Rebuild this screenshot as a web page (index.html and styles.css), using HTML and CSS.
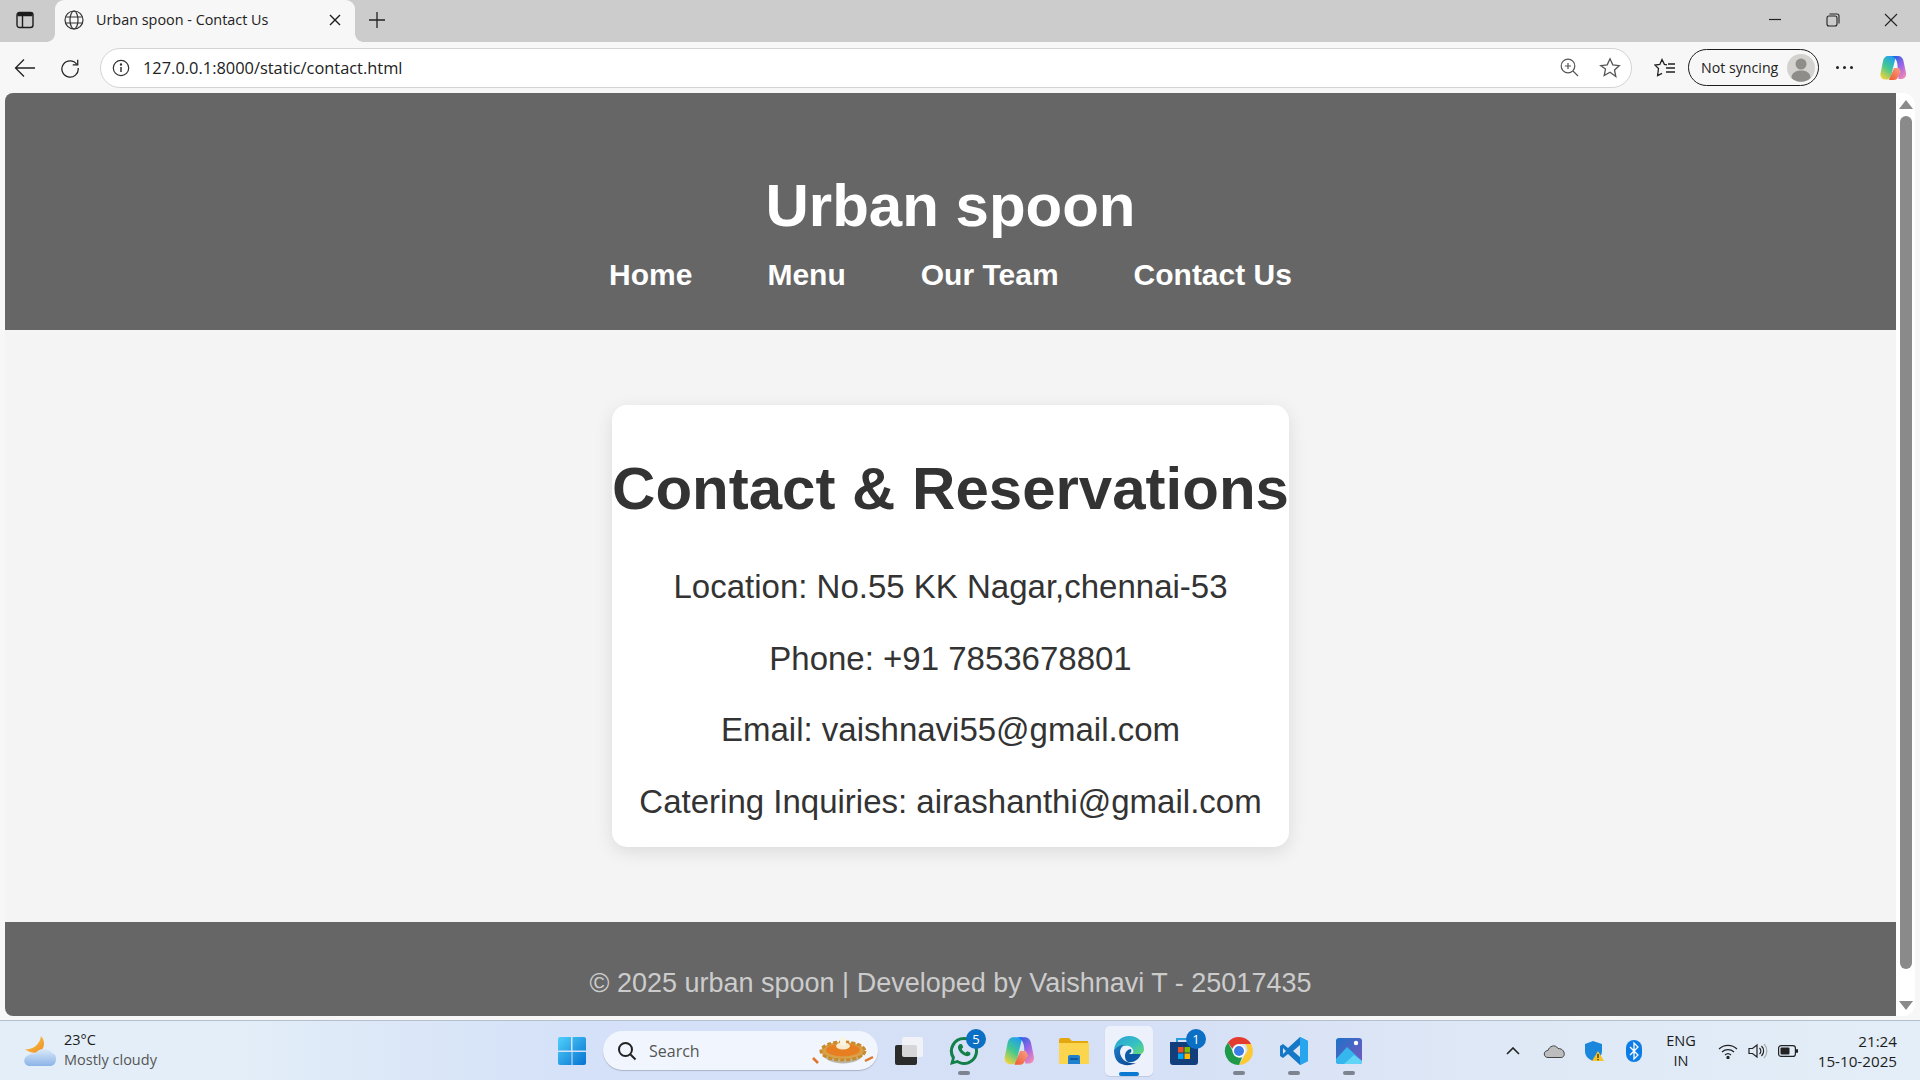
FILE: index.html
```html
<!DOCTYPE html>
<html lang="en">
<head>
    <meta charset="UTF-8">
    <meta name="viewport" content="width=device-width, initial-scale=1.0">
    <title>Urban spoon - Contact Us</title>
    <link rel="stylesheet" href="styles.css">
</head>
<body>
    <!-- browser tab strip -->
    <div class="tabstrip">
        <svg class="tab-toggle" width="18" height="18" viewBox="0 0 18 18" fill="none" stroke="#1c1c1c" stroke-width="1.4"><rect x="1" y="1.5" width="16" height="15" rx="2.5"/><path d="M1.500 3.500h15" stroke-width="3.500"/><path d="M6.500 5v11"/></svg>
        <div class="tab">
            <svg width="20" height="20" viewBox="0 0 20 20" fill="none" stroke="#333" stroke-width="1.2"><circle cx="10" cy="10" r="9"/><ellipse cx="10" cy="10" rx="4" ry="9"/><path d="M1.600 7h16.800M1.600 13h16.800"/></svg>
            <span class="tab-title">Urban spoon - Contact Us</span>
            <svg width="12" height="12" viewBox="0 0 12 12" stroke="#1c1c1c" stroke-width="1.4"><path d="M1 1l10 10M11 1L1 11"/></svg>
        </div>
        <svg class="tab-new" width="18" height="18" viewBox="0 0 18 18" stroke="#222" stroke-width="1.300"><path d="M9 1v16M1 9h16"/></svg>
        <div class="window-btns">
            <svg width="14" height="14" viewBox="0 0 14 14" stroke="#222" stroke-width="1.200"><path d="M1 6.500h12"/></svg>
            <svg width="14" height="14" viewBox="0 0 14 14" fill="none" stroke="#222" stroke-width="1.100"><rect x="1" y="3" width="10" height="10" rx="2"/><path d="M3.500 1h7.500a2 2 0 0 1 2 2v7.500"/></svg>
            <svg width="14" height="14" viewBox="0 0 14 14" stroke="#222" stroke-width="1.100"><path d="M1 1l12 12M13 1L1 13"/></svg>
        </div>
    </div>

    <!-- address bar -->
    <div class="toolbar">
        <svg class="tool-back" width="22" height="20" viewBox="0 0 22 20" fill="none" stroke="#222" stroke-width="1.300"><path d="M21 10H2M10 1.500L1.500 10l8.500 8.500"/></svg>
        <svg class="tool-reload" width="20" height="20" viewBox="0 0 22 22" fill="none" stroke="#222" stroke-width="1.400"><path d="M18.500 7A9 9 0 1 0 20 11"/><path d="M19.500 2v5.500H14"/></svg>
        <div class="address">
            <svg width="18" height="18" viewBox="0 0 18 18" fill="none" stroke="#333" stroke-width="1.200"><circle cx="9" cy="9" r="7.700"/><path d="M9 8v5" stroke-width="1.500"/><circle cx="9" cy="5.500" r=".6" fill="#333"/></svg>
            <span class="url">127.0.0.1:8000/static/contact.html</span>
            <svg class="addr-zoom" width="19" height="19" viewBox="0 0 19 19" fill="none" stroke="#555" stroke-width="1.200"><circle cx="8" cy="8" r="6.800"/><path d="M13 13l5 5M8 5v6M5 8h6"/></svg>
            <svg class="addr-star" width="22" height="22" viewBox="0 0 22 22" fill="none" stroke="#555" stroke-width="1.300"><path d="M11 1.800l2.800 6 6.500.8-4.800 4.400 1.300 6.500L11 15.300l-5.800 3.200 1.300-6.500L1.700 8.600l6.500-.8z"/></svg>
        </div>
        <svg class="tool-favs" width="22" height="20" viewBox="0 0 22 20" fill="none" stroke="#222" stroke-width="1.300"><path d="M13 6.800l-2.600-.4L8 1.500 5.800 6.400 1 7.100l3.500 3.500-.9 6.900L8 15.300M14 6h7M12 10h9M12 14h9"/></svg>
        <div class="sync">
            <span>Not syncing</span>
            <svg width="28" height="28" viewBox="0 0 28 28"><circle cx="14" cy="14" r="14" fill="#d3d2ce"/><circle cx="14" cy="10" r="5.500" fill="#8f8d89"/><path d="M4.500 24c0-5 4-7.500 9.500-7.500s9.500 2.500 9.500 7.500a14 14 0 0 1-19 0z" fill="#8f8d89"/></svg>
        </div>
        <div class="tool-more"><i></i><i></i><i></i></div>
        <svg class="tool-copilot" width="28" height="28" viewBox="0 0 28 28">
            <defs>
                <linearGradient id="cpA" x1=".7" y1="0" x2=".2" y2="1"><stop offset="0" stop-color="#1f9ff0"/><stop offset=".5" stop-color="#45c98f"/><stop offset="1" stop-color="#f6d338"/></linearGradient>
                <linearGradient id="cpB" x1=".2" y1="0" x2=".8" y2="1"><stop offset="0" stop-color="#2b62e0"/><stop offset=".55" stop-color="#a566e6"/><stop offset="1" stop-color="#f58ab4"/></linearGradient>
                <linearGradient id="cpC" x1="1" y1="0" x2="0" y2="1"><stop offset="0" stop-color="#f9a08a"/><stop offset="1" stop-color="#ee5a30"/></linearGradient>
            </defs>
            <path d="M9 2h8l-5 20c-.5 2-2 3.500-3.500 3.500H6c-3 0-5-3-4.500-6L4 7c.5-3 2.500-5 5-5z" fill="url(#cpA)"/>
            <path d="M13 2h6c3 0 5 2 5.500 5l2.500 12c.5 3.500-1.500 6-4.500 6h-3l-1-14c-.3-4-2-7.500-5.500-9z" fill="url(#cpB)"/>
            <path d="M10 26l5-12h5l2 4-3 5c-.8 2-2 3-4 3z" fill="url(#cpC)"/>
        </svg>
    </div>

    <div class="viewport">
        <div class="page">
            <header class="site-header">
                <h1>Urban spoon</h1>
                <nav>
                    <a>Home</a>
                    <a>Menu</a>
                    <a>Our Team</a>
                    <a>Contact Us</a>
                </nav>
            </header>
            <main class="content">
                <section class="card">
                    <h2>Contact &amp; Reservations</h2>
                    <p>Location: No.55 KK Nagar,chennai-53</p>
                    <p>Phone: +91 7853678801</p>
                    <p>Email: vaishnavi55@gmail.com</p>
                    <p>Catering Inquiries: airashanthi@gmail.com</p>
                </section>
            </main>
            <footer class="site-footer">© 2025 urban spoon | Developed by Vaishnavi T - 25017435</footer>
        </div>
        <div class="scrollbar">
            <span class="arrow-up"></span>
            <span class="thumb"></span>
            <span class="arrow-down"></span>
        </div>
    </div>

    <!-- windows taskbar -->
    <div class="taskbar">
        <div class="weather">
            <svg width="32" height="32" viewBox="0 0 32 32">
                <defs>
                    <linearGradient id="wCloud" x1="0" y1="0" x2="0" y2="1"><stop offset="0" stop-color="#dbe9f9"/><stop offset="1" stop-color="#8bb3e8"/></linearGradient>
                    <linearGradient id="wMoon" x1="0" y1="0" x2="1" y2="1"><stop offset="0" stop-color="#fbc94e"/><stop offset="1" stop-color="#ee8f22"/></linearGradient>
                </defs>
                <path d="M17 1c4 4 4 11 0 15-5 3-12 2-16-2 7 1 15-4 16-13z" fill="url(#wMoon)"/>
                <path d="M6 31c-7 0-8-9-1-11 1-1 3-2 6-1 3-6 13-7 17-1 2 1 4 1 4 6s-3 7-6 7z" fill="url(#wCloud)"/>
            </svg>
            <div class="weather-text">
                <span>23°C</span>
                <span class="cond">Mostly cloudy</span>
            </div>
        </div>

        <div class="task-center">
            <svg class="win-logo" width="30" height="30" viewBox="0 0 30 30">
                <defs><linearGradient id="winG" x1="0" y1="0" x2="1" y2="1"><stop offset="0" stop-color="#4fd0fb"/><stop offset="1" stop-color="#0672d0"/></linearGradient></defs>
                <path d="M1 3a2 2 0 0 1 2-2h11v13.500H1zM15.500 1H27a2 2 0 0 1 2 2v11.500H15.500zM1 16h13.500v13H3a2 2 0 0 1-2-2zM15.500 16H29v11a2 2 0 0 1-2 2H15.500z" fill="url(#winG)"/>
            </svg>
            <div class="search">
                <svg width="20" height="20" viewBox="0 0 20 20" fill="none" stroke="#222" stroke-width="2"><circle cx="8.500" cy="8.500" r="6.500"/><path d="M13.500 13.500l5 5"/></svg>
                <span class="search-label">Search</span>
                <svg width="62" height="28" viewBox="0 0 62 28">
                    <path d="M1 21l5 5M61 20l-8 4" stroke="#e0762a" stroke-width="2.500"/>
                    <path d="M10 16c4 14 38 14 42 0z" fill="#b9b6a8"/>
                    <ellipse cx="31" cy="14" rx="22" ry="9" fill="#d8a24a" stroke="#c98a2c" stroke-width="3" stroke-dasharray="4 2"/>
                    <ellipse cx="31" cy="13" rx="17" ry="6.500" fill="#e77f21"/>
                    <ellipse cx="31" cy="9" rx="7" ry="3.500" fill="#f7ecd2"/>
                    <ellipse cx="31" cy="4.500" rx="3" ry="4.500" fill="#fbf4e2"/>
                </svg>
            </div>
            <svg class="task-view" width="30" height="30" viewBox="0 0 30 30">
                <rect x="1" y="9" width="22" height="20" rx="2" fill="#2b2b2b"/>
                <rect x="8" y="1" width="21" height="20" rx="2" fill="#f4f5f8" fill-opacity=".85"/>
            </svg>
            <div class="apps">
                <div class="app running">
                    <svg width="32" height="32" viewBox="0 0 32 32"><path fill-rule="evenodd" d="M16 2a14 14 0 1 1-7 26.100L2 30l1.900-6.800A14 14 0 0 1 16 2zm0 3a11 11 0 0 0-9 17.300l-1 3.700 3.700-1A11 11 0 1 0 16 5z" fill="#13804a"/><path d="M12 9l2 .3 1.200 3-1.500 1.700c.9 1.600 2.200 2.900 3.900 3.700l1.600-1.400 3 1.100.2 2.100c-1.100 1.600-3.200 2.100-5.300 1.300-3.200-1.300-5.900-4-7-7-.5-2.100.3-3.900 1.900-4.800z" fill="#13804a"/></svg>
                    <span class="badge">5</span>
                </div>
                <div class="app">
                    <svg width="32" height="32" viewBox="0 0 28 28">
                        <path d="M9 2h8l-5 20c-.5 2-2 3.500-3.500 3.500H6c-3 0-5-3-4.500-6L4 7c.5-3 2.500-5 5-5z" fill="url(#cpA)"/>
                        <path d="M13 2h6c3 0 5 2 5.500 5l2.500 12c.5 3.500-1.500 6-4.500 6h-3l-1-14c-.3-4-2-7.500-5.500-9z" fill="url(#cpB)"/>
                        <path d="M10 26l5-12h5l2 4-3 5c-.8 2-2 3-4 3z" fill="url(#cpC)"/>
                    </svg>
                </div>
                <div class="app">
                    <svg width="32" height="28" viewBox="0 0 32 28"><path d="M1 3a2 2 0 0 1 2-2h8l3 3h16v6H1z" fill="#e3a70f"/><path d="M1 6h30v20a1 1 0 0 1-1 1H2a1 1 0 0 1-1-1z" fill="#fbd54e"/><path d="M10 20a2 2 0 0 1 2-2h8a2 2 0 0 1 2 2v7H10z" fill="#1f80cf"/><path d="M12 22h8" stroke="#0d4f8c" stroke-width="1.500"/></svg>
                </div>
                <div class="app active">
                    <svg width="32" height="32" viewBox="0 0 32 32">
                        <defs>
                            <linearGradient id="edgeA" x1="0" y1="0" x2="1" y2="1"><stop offset="0" stop-color="#2c9fd8"/><stop offset=".55" stop-color="#35c1c4"/><stop offset="1" stop-color="#6cdc6a"/></linearGradient>
                            <linearGradient id="edgeB" x1="0" y1="0" x2="1" y2="1"><stop offset="0" stop-color="#1b7fcb"/><stop offset="1" stop-color="#0b3f8c"/></linearGradient>
                        </defs>
                        <path d="M1 15C2 6 9 1 16 1c9 0 15 6 15 13 0 4-3 6-7 6h-7c3-1 4-3 3-5-1-3-4-5-8-4-4 0-9 2-11 4z" fill="url(#edgeA)"/>
                        <path d="M1 15c2-3 6-5 10-5-4 3-5 7-3 11 2 5 8 8 15 7-6 3-13 3-18-1-3-3-4-8-4-12z" fill="url(#edgeB)"/>
                        <path d="M12 21c0-4 3-7 6-7 1 2 0 4-2 5h12c-2 6-8 9-13 8-2-1-3-3-3-6z" fill="#0d5aa7"/>
                    </svg>
                    <span class="active-line"></span>
                </div>
                <div class="app">
                    <svg width="30" height="30" viewBox="0 0 30 30"><path d="M8 6V3h13v3" fill="none" stroke="#2a9fe0" stroke-width="2"/><path d="M1 6h28v20a3 3 0 0 1-3 3H4a3 3 0 0 1-3-3z" fill="#123f7c"/><rect x="9" y="11" width="5.500" height="5.500" fill="#f25022"/><rect x="15.500" y="11" width="5.500" height="5.500" fill="#7fba00"/><rect x="9" y="17.500" width="5.500" height="5.500" fill="#00a4ef"/><rect x="15.500" y="17.500" width="5.500" height="5.500" fill="#ffb900"/></svg>
                    <span class="badge">1</span>
                </div>
                <div class="app running">
                    <svg width="30" height="30" viewBox="0 0 30 30">
                        <path d="M15 1a14 14 0 0 1 12.100 7H15a7 7 0 0 0-6.600 4.700L3.900 6.400A14 14 0 0 1 15 1z" fill="#e33b2e"/>
                        <path d="M27.100 8A14 14 0 0 1 15 29l6-10.400A7 7 0 0 0 21 8z" fill="#fcc934"/>
                        <path d="M3.900 6.400L9.600 16.500A7 7 0 0 0 18 21.400L15 29A14 14 0 0 1 3.900 6.400z" fill="#1e9a4a"/>
                        <circle cx="15" cy="15" r="6.500" fill="#fff"/>
                        <circle cx="15" cy="15" r="5" fill="#3b7de8"/>
                    </svg>
                </div>
                <div class="app running">
                    <svg width="30" height="30" viewBox="0 0 30 30"><path fill-rule="evenodd" d="M21 1l8 4v20l-8 4L9 18l-5 4-3-2v-10l3-2 5 4zM21 9l-7 6 7 6zM4 12v6l3-3z" fill="#1578c6"/><path d="M21 1l8 4v20l-8 4z" fill="#27a6ef"/></svg>
                </div>
                <div class="app running">
                    <svg width="26" height="26" viewBox="0 0 26 26">
                        <defs><linearGradient id="phG" x1="0" y1="0" x2="1" y2="1"><stop offset="0" stop-color="#1d72c8"/><stop offset="1" stop-color="#7a57c0"/></linearGradient></defs>
                        <rect width="26" height="26" rx="3" fill="url(#phG)"/>
                        <circle cx="20" cy="5" r="2.200" fill="#fff"/>
                        <path d="M0 21l11-12 15 14v0a3 3 0 0 1-3 3H3a3 3 0 0 1-3-3z" fill="#35b6ec"/>
                        <path d="M8 26l10-9 8 6a3 3 0 0 1-3 3z" fill="#62d4f6"/>
                    </svg>
                </div>
            </div>
        </div>

        <div class="tray">
            <svg class="tray-chevron" width="14" height="8" viewBox="0 0 14 8" fill="none" stroke="#222" stroke-width="1.600"><path d="M1 7l6-6 6 6"/></svg>
            <svg class="tray-cloud" width="22" height="14" viewBox="0 0 22 14"><path d="M5 13.500c-5 0-5-7 0-7 1-4 7-7 10-2 5 0 7 4 6 7-.5 1.500-2 2-3 2z" fill="#bdbdbd" stroke="#444"/></svg>
            <svg class="tray-shield" width="20" height="22" viewBox="0 0 20 22"><path d="M9 1l9 3v7c0 5-4 8-9 10-5-2-8-5-8-10V4z" fill="#1b87dc"/><path d="M8 21l6-10 6 10z" fill="#f7c325"/><path d="M14 14v4M14 19v1.200" stroke="#222" stroke-width="1.200"/></svg>
            <svg class="tray-bt" width="16" height="22" viewBox="0 0 16 22"><rect width="16" height="22" rx="8" fill="#0c7ce6"/><path d="M4 7l8 8-4 4V3l4 4-8 8" fill="none" stroke="#fff" stroke-width="1.300"/></svg>
            <div class="tray-lang">ENG<br>IN</div>
            <svg class="tray-wifi" width="20" height="16" viewBox="0 0 20 16" fill="none" stroke="#222" stroke-width="1.300"><path d="M1 6a13 13 0 0 1 18 0M4 9a9 9 0 0 1 12 0M7 12a4.500 4.500 0 0 1 6 0"/><circle cx="10" cy="14.500" r="1" fill="#222"/></svg>
            <svg class="tray-sound" width="20" height="16" viewBox="0 0 20 16" fill="none" stroke="#222" stroke-width="1.200"><path d="M1 5.500h3.500L9 2v12l-4.500-3.500H1zM11.500 5a4 4 0 0 1 0 6M13.500 3a7 7 0 0 1 0 10"/><path d="M16 1a10 10 0 0 1 0 14" stroke="#aaa"/></svg>
            <svg class="tray-battery" width="20" height="12" viewBox="0 0 20 12"><rect x=".6" y=".6" width="16.800" height="10.800" rx="2.500" fill="none" stroke="#222" stroke-width="1.200"/><rect x="2.500" y="2.500" width="9" height="7" rx="1" fill="#222"/><rect x="18" y="4" width="2" height="4" rx="1" fill="#222"/></svg>
            <div class="clock">21:24<br>15-10-2025</div>
        </div>
    </div>
</body>
</html>
```

FILE: styles.css
```css
* {
    box-sizing: border-box;
}
body {
    margin: 0;
    height: 1080px;
    overflow: hidden;
    font-family: "Liberation Sans", Arial, sans-serif;
    background-color: #f7f7f7;
    display: flex;
    flex-direction: column;
}

/* tab strip */
.tabstrip {
    height: 42px;
    padding: 0 0 3px 16px;
    background-color: #cccccc;
    display: flex;
    align-items: center;
}
.tab-toggle {
    flex: none;
}
.tab {
    width: 300px;
    height: 42px;
    margin: 0 0 -3px 21px;
    padding: 0 14px 3px 9px;
    background-color: #f7f7f7;
    border-radius: 9px 9px 0 0;
    position: relative;
    display: flex;
    align-items: center;
    font-family: "Open Sans", sans-serif;
    font-size: 14.4px;
    color: #222;
}
.tab::before, .tab::after {
    content: "";
    position: absolute;
    bottom: 0;
    width: 8px;
    height: 8px;
}
.tab::before {
    left: -8px;
    background: radial-gradient(circle at 0 0, transparent 7.5px, #f7f7f7 8px);
}
.tab::after {
    right: -8px;
    background: radial-gradient(circle at 100% 0, transparent 7.5px, #f7f7f7 8px);
}
.tab-title {
    flex: 1;
    margin-left: 12px;
}
.tab-new {
    margin-left: 13px;
}
.window-btns {
    margin-left: auto;
    display: flex;
    gap: 44px;
    padding-right: 22px;
}

/* address bar */
.toolbar {
    height: 51px;
    display: flex;
    align-items: center;
    padding-left: 14px;
}
.tool-reload {
    margin-left: 24px;
}
.address {
    width: 1532px;
    height: 40px;
    margin-left: 20px;
    padding: 0 10px 0 11px;
    background-color: #fff;
    border: 1px solid #d4d4d4;
    border-radius: 20px;
    display: flex;
    align-items: center;
}
.url {
    flex: 1;
    margin-left: 13px;
    font-family: "Open Sans", sans-serif;
    font-size: 16.4px;
    color: #222;
}
.addr-star {
    margin-left: 20px;
}
.tool-favs {
    margin-left: 22px;
}
.sync {
    width: 131px;
    height: 37px;
    margin-left: 12px;
    padding: 0 3px 0 12px;
    border: 1.5px solid #1c1c1c;
    border-radius: 19px;
    display: flex;
    align-items: center;
    justify-content: space-between;
    font-family: "Open Sans", sans-serif;
    font-size: 14.2px;
    color: #222;
}
.tool-more {
    margin-left: 17px;
    display: flex;
    gap: 4px;
}
.tool-more i {
    width: 3px;
    height: 3px;
    border-radius: 50%;
    background-color: #222;
}
.tool-copilot {
    margin-left: 26px;
}

/* web page */
.viewport {
    height: 923px;
    padding-left: 5px;
    display: flex;
}
.page {
    width: 1891px;
    height: 923px;
    background-color: #f4f4f4;
    border-radius: 8px 0 0 8px;
    overflow: hidden;
    display: flex;
    flex-direction: column;
}
.site-header {
    height: 237px;
    padding-top: 78px;
    background-color: #666;
    color: #fff;
    text-align: center;
}
.site-header h1 {
    margin: 0;
    font-size: 60px;
    line-height: 70px;
}
.site-header nav {
    margin-top: 16px;
    display: flex;
    justify-content: center;
    gap: 75px;
    font-size: 30px;
    font-weight: bold;
    line-height: 36px;
}
.content {
    flex: 1;
    padding-top: 75px;
}
.card {
    width: 677px;
    height: 442px;
    margin: 0 auto;
    background-color: #fff;
    border-radius: 15px;
    box-shadow: 0 5px 18px rgba(0, 0, 0, 0.1);
    text-align: center;
    color: #333;
}
.card h2 {
    margin: 0;
    padding-top: 49px;
    font-size: 60px;
    line-height: 70px;
    white-space: nowrap;
}
.card p {
    margin: 0;
    font-size: 33px;
    line-height: 38px;
}
.card h2 + p {
    margin-top: 44px;
}
.card p + p {
    margin-top: 33.6px;
}
.site-footer {
    height: 94px;
    padding-top: 45px;
    background-color: #666;
    color: #ccc;
    font-size: 27px;
    line-height: 32px;
    text-align: center;
}
.scrollbar {
    width: 19px;
    height: 923px;
    padding: 7px 0 6px;
    background-color: #fff;
    border-radius: 0 12px 12px 0;
    display: flex;
    flex-direction: column;
    align-items: center;
}
.arrow-up, .arrow-down {
    width: 0;
    height: 0;
    border-left: 7px solid transparent;
    border-right: 7px solid transparent;
}
.arrow-up {
    border-bottom: 9px solid #8a8a8a;
}
.arrow-down {
    border-top: 9px solid #8a8a8a;
}
.thumb {
    flex: 1;
    width: 12px;
    margin: 7px 0 32px;
    background-color: #8a8a8a;
    border-radius: 6px;
}

/* taskbar */
.taskbar {
    height: 60px;
    margin-top: 4px;
    border-top: 1px solid #b6bfcc;
    background: linear-gradient(90deg, #e3eef8 0%, #e3eef8 12%, #d4e1f8 30%, #d6e0f6 60%, #dfe9f6 80%, #e3eef8 100%);
    display: flex;
    align-items: center;
    font-family: "Open Sans", sans-serif;
    font-size: 14.5px;
    color: #1c1c1c;
}
.weather {
    width: 557px;
    padding-left: 24px;
    display: flex;
    align-items: center;
    gap: 8px;
}
.weather-text {
    padding-bottom: 2px;
    display: flex;
    flex-direction: column;
    line-height: 20px;
}
.cond {
    color: #555;
}
.task-center {
    display: flex;
    align-items: center;
}
.search {
    width: 275px;
    height: 39px;
    margin-left: 16px;
    padding: 0 4px 0 14px;
    background-color: #f1f5fd;
    border-radius: 20px;
    box-shadow: 0 1px 1px rgba(0, 0, 0, 0.2);
    display: flex;
    align-items: center;
    font-size: 16px;
    color: #555;
}
.search-label {
    flex: 1;
    margin-left: 12px;
}
.task-view {
    margin-left: 16px;
}
.apps {
    margin-left: 16px;
    display: flex;
    gap: 7px;
}
.app {
    width: 48px;
    height: 50px;
    border-radius: 5px;
    position: relative;
    display: flex;
    align-items: center;
    justify-content: center;
}
.app.running::after {
    content: "";
    position: absolute;
    left: 18px;
    bottom: 1px;
    width: 12px;
    height: 4px;
    border-radius: 2px;
    background-color: #7d8490;
}
.app.active {
    background-color: #edf1fb;
    box-shadow: 0 1px 1px rgba(0, 0, 0, 0.1);
}
.active-line {
    position: absolute;
    left: 14px;
    bottom: 0;
    width: 20px;
    height: 4px;
    border-radius: 2px;
    background-color: #0b78d4;
}
.badge {
    position: absolute;
    top: 3px;
    right: 2px;
    width: 20px;
    height: 20px;
    border-radius: 50%;
    background-color: #0b6fc4;
    color: #fff;
    font-size: 13px;
    line-height: 20px;
    text-align: center;
}
.tray {
    margin-left: auto;
    padding-right: 23px;
    display: flex;
    align-items: center;
}
.tray-cloud {
    margin-left: 23px;
}
.tray-shield {
    margin-left: 19px;
}
.tray-bt {
    margin-left: 22px;
}
.tray-lang {
    margin-left: 24px;
    line-height: 20px;
    text-align: center;
}
.tray-wifi {
    margin-left: 22px;
}
.tray-sound {
    margin-left: 10px;
}
.tray-battery {
    margin-left: 10px;
}
.clock {
    margin-left: 20px;
    font-size: 15.2px;
    line-height: 20px;
    text-align: right;
}
```
